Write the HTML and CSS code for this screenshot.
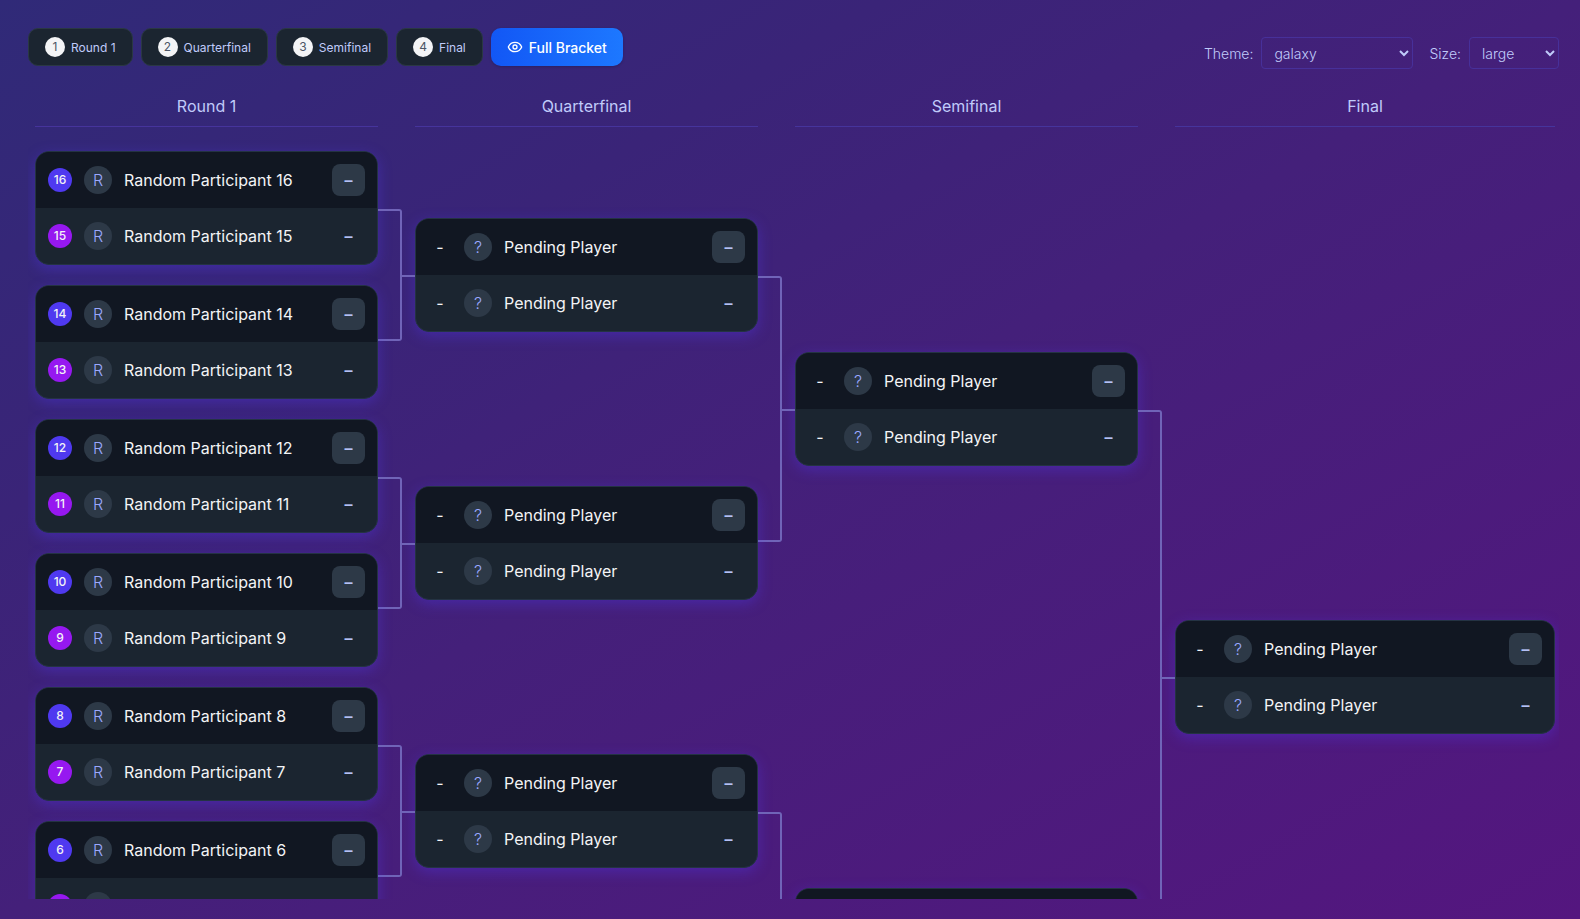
FILE: index.html
```
<!DOCTYPE html>
<html lang="en">
<head>
    <meta charset="UTF-8">
    <meta name="viewport" content="width=device-width, initial-scale=1.0">
    <title>Tournament Bracket</title>
    <link rel="stylesheet" href="styles.css">
</head>
<body>
    <header class="toolbar">
        <nav class="round-nav">
            <button type="button" class="round-btn"><span class="round-number">1</span>Round 1</button>
            <button type="button" class="round-btn"><span class="round-number">2</span>Quarterfinal</button>
            <button type="button" class="round-btn"><span class="round-number">3</span>Semifinal</button>
            <button type="button" class="round-btn"><span class="round-number">4</span>Final</button>
            <button type="button" class="full-btn">
                <svg class="eye" viewBox="0 0 24 24" fill="none" stroke="currentColor" stroke-width="2" stroke-linecap="round" stroke-linejoin="round">
                    <path d="M2 12C3.700 7.900 7.500 5 12 5s8.300 2.900 10 7c-1.700 4.100-5.500 7-10 7s-8.300-2.900-10-7z"/>
                    <circle cx="12" cy="12" r="3"/>
                </svg>
                Full Bracket
            </button>
        </nav>
        <div class="settings">
            <label for="theme">Theme:</label>
            <select id="theme" class="theme-select">
                <option>galaxy</option>
            </select>
            <label for="size">Size:</label>
            <select id="size" class="size-select">
                <option>large</option>
            </select>
        </div>
    </header>

    <main class="bracket" id="bracket"></main>

    <script src="script.js"></script>
</body>
</html>
```
FILE: styles.css
```
*, *::before, *::after {
    box-sizing: border-box;
}
body {
    display: flex;
    flex-direction: column;
    height: 100vh;
    margin: 0;
    padding: 28px 21px 20px 28px;
    overflow: hidden;
    font-family: Inter, "Liberation Sans", sans-serif;
    background: linear-gradient(to bottom right, #302a78, #3a2478 28%, #44207a 50%, #54167f);
    color: #c0cbfa;
}
button, select {
    font-family: inherit;
    color: inherit;
}
.toolbar {
    display: flex;
    justify-content: space-between;
    align-items: flex-start;
}
.round-nav {
    display: flex;
    align-items: center;
    gap: 8px;
}
.round-btn, .full-btn {
    display: flex;
    align-items: center;
    gap: 6px;
    height: 38px;
    padding: 0 16px;
    border-radius: 10px;
    cursor: pointer;
}
.round-btn {
    border: 1px solid #2a3843;
    background: #1b2530;
    font-size: 12px;
}
.round-number {
    width: 20px;
    border-radius: 50%;
    background: #f3f4f6;
    color: #4a5565;
    line-height: 20px;
}
.full-btn {
    border: 0;
    background: linear-gradient(90deg, #1257f5, #1d78ff);
    box-shadow: 0 1px 3px rgba(0, 0, 0, 0.2);
    color: #fff;
    font-size: 14px;
    font-weight: 500;
}
.eye {
    width: 16px;
    height: 16px;
}
.settings {
    display: flex;
    align-items: center;
    gap: 8px;
    margin-top: 9px;
    font-size: 14px;
    font-weight: 300;
}
.settings select {
    height: 32px;
    padding: 0 0 0 8px;
    border: 1px solid #47309a;
    border-radius: 4px;
    background: transparent;
    font-size: 14px;
    font-weight: 300;
}
.theme-select {
    width: 152px;
    margin-right: 8px;
}
.size-select {
    width: 90px;
}
.bracket {
    display: grid;
    grid-template-columns: repeat(4, 1fr);
    flex: 1;
    min-height: 0;
    margin-top: 17px;
    padding: 0 4px 0 7px;
    overflow-y: auto;
    scrollbar-width: none;
}
.round {
    display: flex;
    flex-direction: column;
    padding-right: 37px;
}
.round:last-child {
    padding-right: 0;
}
.round-title {
    margin: 0 0 14px;
    border-bottom: 1px solid #46349c;
    font-size: 16px;
    font-weight: 400;
    line-height: 40px;
    text-align: center;
}
.matches {
    display: flex;
    flex: 1;
    flex-direction: column;
}
.slot {
    display: flex;
    position: relative;
    flex: 1;
    align-items: center;
    padding: 10px 0;
}
.match {
    flex: 1;
    overflow: hidden;
    border: 1px solid #243343;
    border-radius: 14px;
    background: #1b2530;
    box-shadow: 0 4px 14px rgba(79, 57, 246, 0.35);
}
.player {
    display: flex;
    align-items: center;
    gap: 12px;
    height: 56px;
    padding: 0 12px;
    color: #f3f4f6;
}
.player:first-child {
    background: #111722;
}
.seed {
    width: 24px;
    border-radius: 50%;
    font-size: 12px;
    font-weight: 500;
    line-height: 24px;
    text-align: center;
}
.seed-top {
    background: #4f39f0;
}
.seed-bottom {
    background: #9618f0;
}
.seed-empty {
    font-size: 16px;
    font-weight: 400;
}
.avatar {
    width: 28px;
    border-radius: 50%;
    background: #2d3947;
    color: #9aa8ff;
    font-size: 16px;
    font-weight: 300;
    line-height: 28px;
    text-align: center;
}
.name {
    flex: 1;
    font-size: 16px;
}
.score {
    width: 33px;
    border-radius: 8px;
    color: #b4c0f5;
    font-size: 16px;
    font-weight: 600;
    line-height: 32px;
    text-align: center;
}
.player:first-child .score {
    background: #2d3947;
}
/* bracket lines: joins two slots on the right, tail on the left */
.slot.joins::after {
    content: "";
    position: absolute;
    top: calc(50% + 1px);
    left: 100%;
    width: 24px;
    height: calc(100% - 2px);
    border: 2px solid #7064b8;
    border-left: 0;
    border-radius: 0 3px 3px 0;
}
.slot.tail::before {
    content: "";
    position: absolute;
    top: 50%;
    right: 100%;
    width: 15px;
    height: 2px;
    background: #7064b8;
}
```
FILE: script.js
```
const rounds = ['Round 1', 'Quarterfinal', 'Semifinal', 'Final'];
const bracket = document.getElementById('bracket');

function playerRow(seed, side) {
    if (seed) {
        return `<div class="player"><span class="seed seed-${side}">${seed}</span><span class="avatar">R</span><span class="name">Random Participant ${seed}</span><span class="score">–</span></div>`;
    }
    return '<div class="player"><span class="seed seed-empty">-</span><span class="avatar">?</span><span class="name">Pending Player</span><span class="score">–</span></div>';
}

rounds.forEach((title, r) => {
    const total = 8 / 2 ** r;
    let slots = '';
    for (let i = 0; i < total; i++) {
        const seed = r === 0 ? 16 - i * 2 : 0;
        const joins = r < rounds.length - 1 && i % 2 === 0 ? ' joins' : '';
        const tail = r > 0 ? ' tail' : '';
        slots += `<div class="slot${joins}${tail}"><div class="match">${playerRow(seed, 'top')}${playerRow(seed && seed - 1, 'bottom')}</div></div>`;
    }
    bracket.innerHTML += `<section class="round"><h2 class="round-title">${title}</h2><div class="matches">${slots}</div></section>`;
});
```
